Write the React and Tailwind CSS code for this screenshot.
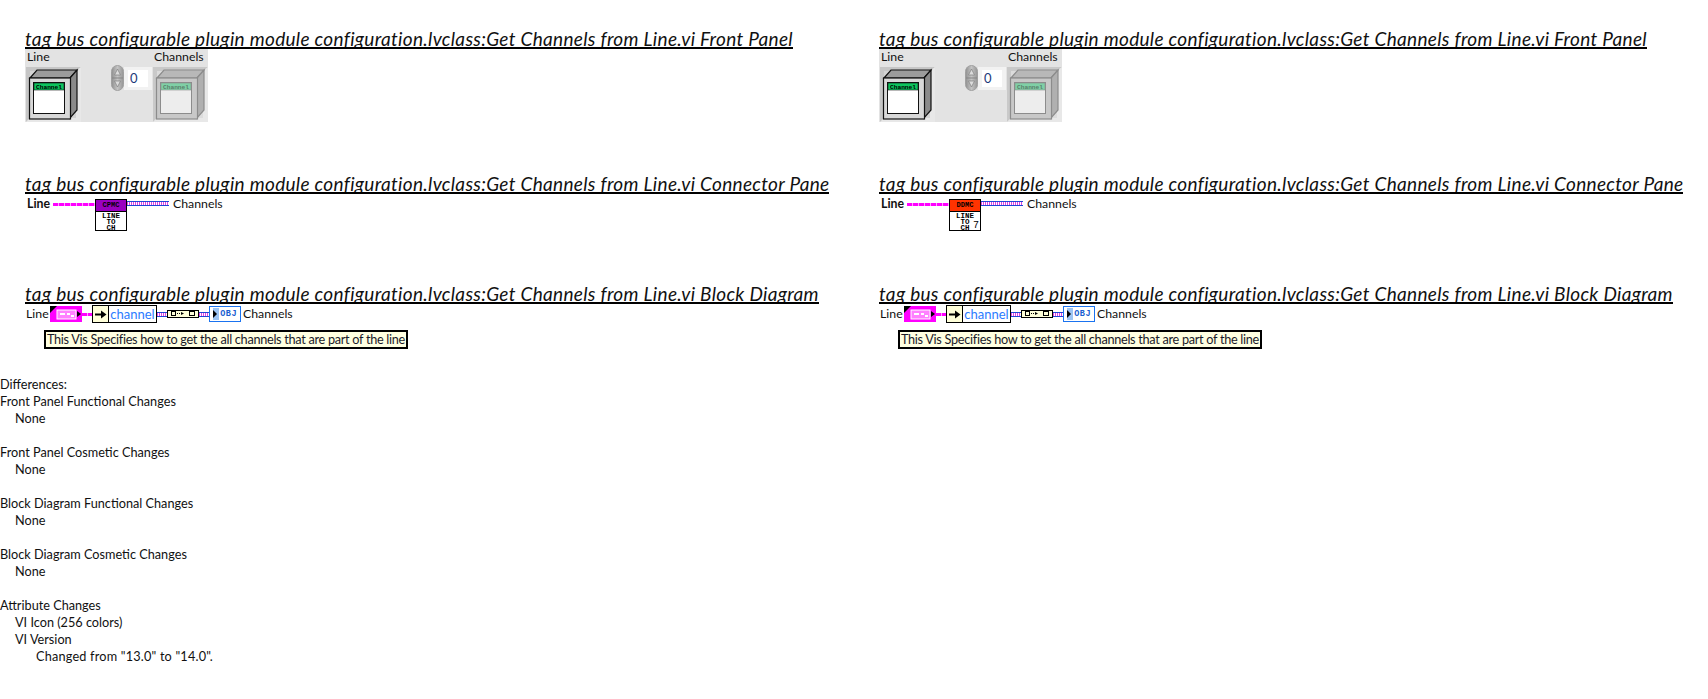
function Heading({ children, className = "" }) {
  return (
    <div className={`${className} flex`}>
      <h2 className="border-b-2 border-black h-[26px] leading-[31px] text-[19px] italic font-normal tracking-[0.31px] text-[#111] whitespace-nowrap overflow-hidden">
        {children}
      </h2>
    </div>
  );
}

function ArrayBox({ dim }) {
  const stroke = dim ? "#8c8c8c" : "#111";
  const face = dim ? "#ededed" : "#fff";
  const bar = dim ? "#7fd0a6" : "#0dc45e";
  const txt = dim ? "#5a7f6c" : "#000";
  return (
    <svg width="55" height="55" viewBox="0 0 55 55" className="block">
      <rect x="0" y="0" width="55" height="55" fill={dim ? "#dcdcdc" : "#d4d4d4"} />
      <path d="M0 55 L0 0 L55 0 L50 4 L4 4 L4 51 Z" fill={dim ? "#c9c9c9" : "#c6c6c6"} />
      <path d="M55 0 L55 55 L0 55 L4 51 L50 51 L50 4Z" fill="#e8e8e8" />
      <path d="M4 11 L11 3 L51 3 L44 11Z" fill={dim ? "#b8b8b8" : "#9c9c9c"} stroke={stroke} strokeWidth="1.2" />
      <path d="M44 11 L51 3 L51 43 L44 51Z" fill={dim ? "#b0b0b0" : "#8a8a8a"} stroke={stroke} strokeWidth="1.2" />
      <rect x="3.5" y="11" width="41" height="41" fill={dim ? "#c8c8c8" : "#d8d8d8"} stroke={stroke} strokeWidth="1.2" />
      <rect x="7.5" y="15.5" width="31" height="31" fill={face} stroke={stroke} strokeWidth="1" />
      <rect x="8" y="16" width="30" height="7" fill={bar} stroke={stroke} strokeWidth="0.6" />
      <text x="23" y="22" textAnchor="middle" fontSize="6.2" fontWeight="700" fontFamily="'Liberation Mono',monospace" fill={txt}>Channel</text>
    </svg>
  );
}

function Spinner() {
  return (
    <svg width="13" height="26" viewBox="0 0 13 26" className="block">
      <defs>
        <linearGradient id="sp" x1="0" x2="1" y1="0" y2="0">
          <stop offset="0" stopColor="#8f8f8f" />
          <stop offset="0.5" stopColor="#c4c4c4" />
          <stop offset="1" stopColor="#949494" />
        </linearGradient>
      </defs>
      <rect x="0.5" y="0.5" width="12" height="25" rx="6" fill="url(#sp)" stroke="#a0a0a0" />
      <path d="M6.5 4 L3.5 10 H9.5Z" fill="#dcdcdc" stroke="#808080" strokeWidth="0.7" />
      <path d="M6.5 22 L3.5 16 H9.5Z" fill="#dcdcdc" stroke="#808080" strokeWidth="0.7" />
      <path d="M1 13 H12" stroke="#858585" />
    </svg>
  );
}

function FrontPanel() {
  return (
    <div className="flex w-[183px] h-[73px] bg-[#e3e3e3] text-[12.3px] text-[#111]">
      <div className="w-[56px] ml-[1px] flex flex-col">
        <div className="h-[18px] pl-[1px] leading-[16px]">Line</div>
        <ArrayBox />
      </div>
      <div className="w-[71px] flex items-start pt-[16px] pl-[29px]">
        <Spinner />
        <div className="w-[28px] h-[23px] mt-[2px] bg-[#f2f2f2] p-[3px] pl-[4px]">
          <div className="bg-white h-[17px] w-[20px] text-[13px] leading-[17px] pl-[2px] text-[#1c3a7a]">0</div>
        </div>
      </div>
      <div className="flex flex-col w-[55px]">
        <div className="h-[18px] ml-[1px] leading-[16px] whitespace-nowrap">Channels</div>
        <ArrayBox dim />
      </div>
    </div>
  );
}

function PinkWire({ w }) {
  return (
    <div className={`${w} h-[3px] bg-[repeating-linear-gradient(90deg,#ff00ff_0_5px,#ffa0ff_5px_6px)]`} />
  );
}

function BlueWire({ w }) {
  return (
    <div className={`${w} h-[5px] border-y border-[#1f47d6] bg-[repeating-linear-gradient(90deg,#e040e0_0_1px,#ffffff_1px_2px)]`} />
  );
}

function ConnectorIcon({ code, color, seven }) {
  const mono = "font-['Liberation_Mono',monospace] font-bold";
  return (
    <div className="w-[32px] h-[32px] border border-black bg-white flex flex-col">
      <div className={`h-[12px] ${color} border-b border-black text-center text-[7px] leading-[11px] text-black ${mono}`}>{code}</div>
      <div className={`relative flex-1 text-center text-[7.5px] leading-[6px] pt-[1px] text-black ${mono}`}>
        <div>LINE</div>
        <div>TO</div>
        <div>CH</div>
        {seven && <span className="absolute right-[1px] bottom-[0px] text-[10px] leading-[10px] font-normal">7</span>}
      </div>
    </div>
  );
}

function Connector({ code, color, seven }) {
  return (
    <div className="flex items-start h-[32px] pl-[2px] mt-[5px] text-[12.3px] text-[#111]">
      <span className="font-bold w-[26px] leading-[10px]">Line</span>
      <div className="w-[42px] mt-[4px]"><PinkWire w="w-[42px]" /></div>
      <ConnectorIcon code={code} color={color} seven={seven} />
      <div className="mt-[2px]"><BlueWire w="w-[42px]" /></div>
      <span className="ml-[4px] leading-[10px]">Channels</span>
    </div>
  );
}

function BlockDiagram() {
  return (
    <div className="pl-[1px] mt-[1px] text-[12.3px] text-[#111]">
      <div className="flex items-center h-[18px]">
        <span className="w-[24px] leading-[16px]">Line</span>
        <div className="relative w-[32px] h-[16px] bg-[#ff00ff] flex items-center justify-center">
          <svg width="32" height="16" viewBox="0 0 32 16" className="absolute inset-0">
            <rect x="7" y="4" width="19" height="9" fill="#ff80ff" stroke="#fff" />
            <path d="M0 0 H7 L0 7Z" fill="#000" />
            <rect x="10" y="7" width="5" height="2" fill="#fff" />
            <rect x="17" y="7" width="3" height="2" fill="#fff" />
            <rect x="21" y="9" width="3" height="2" fill="#fff" />
            <path d="M27 5 L31 8 L27 11Z" fill="#000" />
          </svg>
        </div>
        <PinkWire w="w-[10px]" />
        <div className="flex h-[18px] border border-black bg-white">
          <div className="w-[16px] bg-[#ffffd9] border-r border-black flex items-center justify-center">
            <svg width="12" height="9" viewBox="0 0 12 9"><path d="M0 4.5 H7" stroke="#000" strokeWidth="2" /><path d="M6 0.5 L11.5 4.5 L6 8.5Z" fill="#000" /></svg>
          </div>
          <div className="w-[47px] text-[#2b7bff] text-[13px] leading-[16px] text-center">channel</div>
        </div>
        <BlueWire w="w-[10px]" />
        <div className="w-[32px] h-[8px] border border-black bg-[#ffffd9] flex items-center">
          <svg width="30" height="6" viewBox="0 0 30 6">
            <rect x="3.5" y="0.5" width="4" height="4" fill="none" stroke="#000" />
            <path d="M9 2.5 H14" stroke="#000" strokeDasharray="1 1" /><path d="M13 1 L16 2.5 L13 4Z" fill="#000" />
            <rect x="21.5" y="0.5" width="5" height="4" fill="none" stroke="#000" />
          </svg>
        </div>
        <BlueWire w="w-[10px]" />
        <div className="relative w-[32px] h-[16px] border border-[#1a73f0] bg-white flex items-center justify-end pr-[3px] text-[8.5px] font-bold text-[#1a5fd0] font-['Liberation_Mono',monospace] leading-none tracking-[0.5px]">
          <span className="absolute left-[3px] top-[1px] w-[6px] h-[12px] bg-[#9cc4f4]" />
          <svg width="5" height="8" viewBox="0 0 5 8" className="absolute left-[3px] top-[3px]"><path d="M0 0 L4 4 L0 8Z" fill="#000" /></svg>
          <span className="relative">OBJ</span>
        </div>
        <span className="ml-[2px] leading-[16px]">Channels</span>
      </div>
      <div className="mt-[8px] ml-[19px] w-[362px] h-[17px] bg-[#ffffe1] border border-black outline outline-[0.5px] outline-black text-[12.7px] tracking-[-0.29px] leading-[15px] text-center text-[#1a1a2a] whitespace-nowrap">
        This Vis Specifies how to get the all channels that are part of the line
      </div>
    </div>
  );
}

function Column({ code, color, seven }) {
  return (
    <div className="w-[854px] pl-[25px] shrink-0">
      <Heading className="pt-[23px]">tag bus configurable plugin module configuration.lvclass:Get Channels from Line.vi Front Panel</Heading>
      <FrontPanel />
      <Heading className="mt-[46px]">tag bus configurable plugin module configuration.lvclass:Get Channels from Line.vi Connector Pane</Heading>
      <Connector code={code} color={color} seven={seven} />
      <Heading className="mt-[47px]">tag bus configurable plugin module configuration.lvclass:Get Channels from Line.vi Block Diagram</Heading>
      <BlockDiagram />
    </div>
  );
}

function Group({ title, children }) {
  return (
    <div className="mb-[17px]">
      <div>{title}</div>
      {children}
    </div>
  );
}

export default function App() {
  return (
    <div className="w-[1708px] h-[699px] bg-white overflow-hidden font-['Lato',sans-serif]">
      <div className="flex">
        <Column code="CPMC" color="bg-[#9a00c0]" />
        <Column code="DDMC" color="bg-[#ff3300]" seven />
      </div>
      <div className="mt-[28px] text-[12.7px] leading-[17px] text-[#111]">
        <div>Differences:</div>
        <Group title="Front Panel Functional Changes"><div className="pl-[15px]">None</div></Group>
        <Group title="Front Panel Cosmetic Changes"><div className="pl-[15px]">None</div></Group>
        <Group title="Block Diagram Functional Changes"><div className="pl-[15px]">None</div></Group>
        <Group title="Block Diagram Cosmetic Changes"><div className="pl-[15px]">None</div></Group>
        <Group title="Attribute Changes">
          <div className="pl-[15px]">VI Icon (256 colors)</div>
          <div className="pl-[15px]">VI Version</div>
          <div className="pl-[36px] tracking-[0.2px]">Changed from "13.0" to "14.0".</div>
        </Group>
      </div>
    </div>
  );
}
